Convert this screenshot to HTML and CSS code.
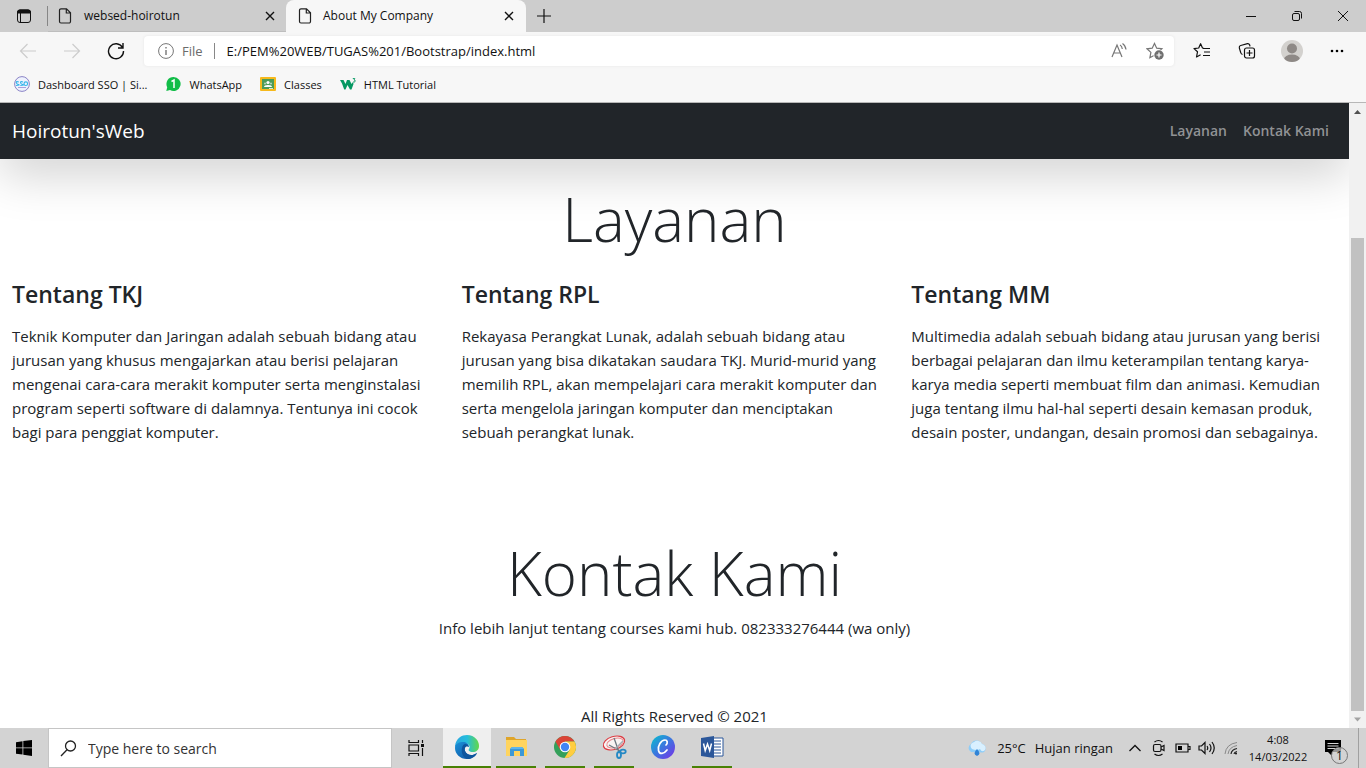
FILE: index.html
```html
<!DOCTYPE html>
<html lang="id">
<head>
<meta charset="utf-8">
<meta name="viewport" content="width=device-width, initial-scale=1">
<title>About My Company</title>
<link rel="stylesheet" href="styles.css">
</head>
<body class="screen">
<div class="tabstrip">
  <button class="tab-actions" aria-label="Tab actions"><svg width="16" height="16" viewBox="0 0 16 16"><rect x="1.5" y="2" width="13" height="12.5" rx="2.5" fill="none" stroke="#111"/><path d="M1.5 5V4a2 2 0 0 1 2-2h9a2 2 0 0 1 2 2v1z" fill="#111" stroke="#111"/><path d="M4.5 5v9.500" stroke="#111"/></svg></button>
  <span class="tab-divider"></span>
  <div class="tab">
    <svg class="tab-icon" width="14" height="16" viewBox="0 0 14 16" fill="none" stroke="#222" stroke-width="1.2"><path d="M3 .8h5.500l4 4V13.500a1.500 1.500 0 0 1-1.500 1.500H3a1.500 1.500 0 0 1-1.500-1.500V2.300A1.500 1.500 0 0 1 3 .8zM8.300 1v4h4"/></svg>
    <button class="tab-title">websed-hoirotun</button>
    <button class="tab-close" aria-label="Close tab"><svg width="10" height="10" viewBox="0 0 10 10"><path d="M1 1l8 8M9 1l-8 8" stroke="#111" stroke-width="1.400"/></svg></button>
  </div>
  <div class="tab tab-active">
    <svg class="tab-icon" width="14" height="16" viewBox="0 0 14 16" fill="none" stroke="#222" stroke-width="1.2"><path d="M3 .8h5.500l4 4V13.500a1.500 1.500 0 0 1-1.500 1.500H3a1.500 1.500 0 0 1-1.500-1.500V2.300A1.500 1.500 0 0 1 3 .8zM8.300 1v4h4"/></svg>
    <button class="tab-title">About My Company</button>
    <button class="tab-close" aria-label="Close tab"><svg width="10" height="10" viewBox="0 0 10 10"><path d="M1 1l8 8M9 1l-8 8" stroke="#111" stroke-width="1.400"/></svg></button>
  </div>
  <button class="new-tab" aria-label="New tab"><svg width="14" height="14" viewBox="0 0 14 14"><path d="M7 0v14M0 7h14" stroke="#111" stroke-width="1.200"/></svg></button>
  <div class="window-controls">
    <button aria-label="Minimize"><svg width="12" height="12" viewBox="0 0 12 12"><path d="M1 6.500h10" stroke="#111"/></svg></button>
    <button aria-label="Restore"><svg width="12" height="12" viewBox="0 0 12 12" fill="none" stroke="#111"><rect x="1.500" y="3.500" width="7" height="7" rx="1.500"/><path d="M3.500 1.500H8.500a2 2 0 0 1 2 2V8.500"/></svg></button>
    <button aria-label="Close"><svg width="12" height="12" viewBox="0 0 12 12"><path d="M1 1l10 10M11 1L1 11" stroke="#111"/></svg></button>
  </div>
</div>

<div class="toolbar">
  <div class="nav-buttons">
    <button aria-label="Back"><svg width="18" height="16" viewBox="0 0 18 16" fill="none" stroke="#ccc" stroke-width="1.200"><path d="M17 8H1.500M8.500 1l-7 7 7 7"/></svg></button>
    <button aria-label="Forward"><svg width="18" height="16" viewBox="0 0 18 16" fill="none" stroke="#ccc" stroke-width="1.200"><path d="M1 8h15.500M9.500 1l7 7-7 7"/></svg></button>
    <button aria-label="Refresh"><svg width="18" height="18" viewBox="0 0 18 18" fill="none" stroke="#111" stroke-width="1.400"><path d="M15.500 5.500A7.500 7.500 0 1 0 16.500 9M16 1v5h-5"/></svg></button>
  </div>
  <div class="address">
    <svg width="16" height="16" viewBox="0 0 16 16" fill="none" stroke="#767676"><circle cx="8" cy="8" r="7.400"/><path d="M8 7v5M8 4v1.600" stroke-width="1.400"/></svg>
    <span class="scheme">File</span>
    <input class="url" type="text" aria-label="Address" value="E:/PEM%20WEB/TUGAS%201/Bootstrap/index.html">
    <button aria-label="Read aloud"><svg width="18" height="18" viewBox="0 0 18 18" fill="none" stroke="#767676" stroke-width="1.200"><path d="M2 15L7 3l5 12M3.700 11h6.600M10 3q2 1 2.300 4M12.500 1.500q3 2 3.500 6"/></svg></button>
    <button aria-label="Add to favorites"><svg width="18" height="18" viewBox="0 0 18 18"><path d="M8.500 1.500l2.200 4.700 5.200.6-3.800 3.600 1 5.300-4.600-2.500-4.600 2.500 1-5.300L1 6.800l5.200-.6z" fill="none" stroke="#767676" stroke-width="1.200"/><circle cx="13" cy="13" r="5.600" fill="#fff"/><circle cx="13" cy="13" r="4.700" fill="#707070"/><path d="M13 10.500v5M10.500 13h5" stroke="#fff" stroke-width="1.200"/></svg></button>
  </div>
  <div class="browser-tools">
    <button aria-label="Favorites"><svg width="18" height="18" viewBox="0 0 18 18" fill="none" stroke="#111" stroke-width="1.200"><path d="M11 6.300L9.500 6 7.600 1.700 5.700 6 1 6.600l3.500 3.200-1 5.200 4.100-2.300M10 6.500h7M11 10h6M10 13.500h7" stroke-linejoin="round"/></svg></button>
    <button aria-label="Collections"><svg width="18" height="18" viewBox="0 0 18 18" fill="none" stroke="#111" stroke-width="1.200"><path d="M4.500 12.500Q3 12 2.700 10.500L1.300 5.800Q1 4 2.700 3.500L9.500 1.700Q11 1.500 11.700 3l.3 1.300"/><rect x="6.500" y="6" width="10" height="10" rx="2"/><path d="M11.500 8v6M8.500 11h6"/></svg></button>
    <button aria-label="Profile"><svg width="22" height="22" viewBox="0 0 22 22"><defs><clipPath id="avatar"><circle cx="11" cy="11" r="11"/></clipPath></defs><g clip-path="url(#avatar)"><path d="M0 0h22v22H0z" fill="#d3d1ce"/><circle cx="11" cy="8.500" r="5" fill="#8e8986"/><ellipse cx="11" cy="19.500" rx="8" ry="5" fill="#8e8986"/></g></svg></button>
    <button aria-label="Settings and more"><svg width="18" height="18" viewBox="0 0 18 18"><circle cx="4" cy="9" r="1.300"/><circle cx="9" cy="9" r="1.300"/><circle cx="14" cy="9" r="1.300"/></svg></button>
  </div>
</div>

<nav class="bookmarks" aria-label="Favorites bar">
  <a href="#"><svg width="16" height="16" viewBox="0 0 16 16" fill="none"><circle cx="8" cy="8" r="7.400" fill="#eef2fd" stroke="#8b83c6"/><path d="M4.800 6Q2 5 2.200 6.500T4.500 8.500 2 9.500M9 6Q6.500 5 6.500 6.500T8.800 8.500 6.300 9.500" stroke="#35b5ea" stroke-width="1.100"/><circle cx="11.800" cy="7.700" r="1.800" stroke="#35b5ea" stroke-width="1.100"/><path d="M4 11.500h8" stroke="#a9a1dc"/></svg><span>Dashboard SSO | Si...</span></a>
  <a href="#"><svg width="16" height="16" viewBox="0 0 16 16"><path d="M8.500 1A7 7 0 1 1 5 14L1.300 15l.9-3.800A7 7 0 0 1 8.500 1z" fill="#12bd48"/><path d="M6.500 5.500L9 4v8" fill="none" stroke="#fff" stroke-width="1.500"/></svg><span>WhatsApp</span></a>
  <a href="#"><svg width="16" height="16" viewBox="0 0 16 16"><rect y="1" width="16" height="14" rx="1" fill="#f6b91c"/><path d="M2 3h12v10H2z" fill="#4b9c5a"/><circle cx="8" cy="6.500" r="1.600" fill="#fff"/><circle cx="5" cy="7.500" r="1" fill="#b7d7bd"/><circle cx="11" cy="7.500" r="1" fill="#b7d7bd"/><path d="M4 11q0-2 4-2t4 2z" fill="#fff"/><path d="M9 12h4v1H9z" fill="#d4ead7"/></svg><span>Classes</span></a>
  <a href="#"><svg width="16" height="16" viewBox="0 0 16 16"><path d="M0 4h3.500l2 4 1.500-4h2.500l2 4L13 6l.5 2-2 5.500h-1.500L7.500 9l-2 4.500H4.200L2 7.500z" fill="#059862"/><path d="M12.800 2.500h2L14 4q2 .2 1 1.700-.8.800-2 .2" fill="none" stroke="#059862" stroke-width=".9"/></svg><span>HTML Tutorial</span></a>
</nav>

<div class="viewport">
  <div class="page">
    <header class="navbar">
      <a class="brand" href="#">Hoirotun'sWeb</a>
      <nav class="nav-links"><a href="#layanan">Layanan</a><a href="#kontak">Kontak Kami</a></nav>
    </header>
    <main>
      <section id="layanan" class="services">
        <h2 class="display">Layanan</h2>
        <div class="columns">
          <article class="service"><h3>Tentang TKJ</h3><p>Teknik Komputer dan Jaringan adalah sebuah bidang atau jurusan yang khusus mengajarkan atau berisi pelajaran mengenai cara-cara merakit komputer serta menginstalasi program seperti software di dalamnya. Tentunya ini cocok bagi para penggiat komputer.</p></article>
          <article class="service"><h3>Tentang RPL</h3><p>Rekayasa Perangkat Lunak, adalah sebuah bidang atau jurusan yang bisa dikatakan saudara TKJ. Murid-murid yang memilih RPL, akan mempelajari cara merakit komputer dan serta mengelola jaringan komputer dan menciptakan sebuah perangkat lunak.</p></article>
          <article class="service"><h3>Tentang MM</h3><p>Multimedia adalah sebuah bidang atau jurusan yang berisi berbagai pelajaran dan ilmu keterampilan tentang karya-karya media seperti membuat film dan animasi. Kemudian juga tentang ilmu hal-hal seperti desain kemasan produk, desain poster, undangan, desain promosi dan sebagainya.</p></article>
        </div>
      </section>
      <section id="kontak" class="contact">
        <h2 class="display">Kontak Kami</h2>
        <p>Info lebih lanjut tentang courses kami hub. 082333276444 (wa only)</p>
      </section>
    </main>
    <footer class="footer">All Rights Reserved © 2021</footer>
  </div>
  <div class="scrollbar" aria-hidden="true">
    <svg class="scroll-arrow" width="17" height="17" viewBox="0 0 17 17"><path d="M5 11l3.500-4 3.500 4z" fill="#505050"/></svg>
    <div class="scroll-track"><div class="scroll-thumb"></div></div>
    <svg class="scroll-arrow" width="17" height="17" viewBox="0 0 17 17"><path d="M5 6.500l3.500 4 3.500-4z" fill="#a3a3a3"/></svg>
  </div>
</div>

<div class="taskbar">
  <button class="start" aria-label="Start"><svg width="16" height="16" viewBox="0 0 16 16"><path d="M0 2.200L6.500 1.200v6.300H0zM7.300 1.100L16 0v7.500H7.300zM0 8.300h6.500v6.300L0 13.800zM7.300 8.300H16V16l-8.700-1.200z"/></svg></button>
  <label class="search"><svg width="17" height="17" viewBox="0 0 17 17" fill="none" stroke="#222" stroke-width="1.300"><circle cx="10.500" cy="6" r="5"/><path d="M7 9.700L1 16"/></svg><input type="text" placeholder="Type here to search" aria-label="Search"></label>
  <button class="task task-view" aria-label="Task view"><svg width="18" height="16" viewBox="0 0 18 16" fill="none" stroke="#111" stroke-width="1.200"><path d="M2 0v2.500h9.500V0M2 16v-2.500h9.500V16M15.500 0v3M15.500 8v8"/><path d="M2 5h9.500v6H2z"/><path d="M14 4h3v3h-3z" fill="#111" stroke="none"/></svg></button>
  <div class="apps">
    <button class="task app running current" aria-label="Microsoft Edge"><svg width="26" height="26" viewBox="0 0 26 26"><defs><linearGradient id="edgeTop"><stop stop-color="#2aa6df"/><stop offset=".5" stop-color="#25bddd"/><stop offset="1" stop-color="#64d847"/></linearGradient><linearGradient id="edgeLow" x1="0" y1="0" x2="1" y2="1"><stop stop-color="#1b91d8"/><stop offset="1" stop-color="#0c4d9c"/></linearGradient></defs><path d="M1 12C2 4 8 1 13 1c8 0 12 6 12 11 0 4-3 6-6 6-4 0-5-2-4-3 2-3-1-6-5-6-4 0-8 1-9 5z" fill="url(#edgeTop)"/><path d="M1 14c0-5 5-6 8-6s6 2 6 5c-3-2-5 1-4 4 2 5 8 5 12 2-2 4-6 6-10 6C6 25 1 20 1 14z" fill="url(#edgeLow)"/><path d="M8 14c1-5 5-5 7-1-3-2-5 1-4 4 2 5 8 5 12 2-2 4-6 6-10 6-4-2-6-6-5-11z" fill="#0d559d"/></svg></button>
    <button class="task app running" aria-label="File Explorer"><svg width="24" height="24" viewBox="0 0 24 24"><path d="M2 2h8l2 2h10v17H2z" fill="#dfa52a"/><path d="M2 5h21v16H2z" fill="#ffd45e"/><path d="M6 21v-7l2-2h10l2 2v7h-4v-5h-6v5z" fill="#3c99d6"/><path d="M6 14l2-2h10l2 2z" fill="#5db5ec"/></svg></button>
    <button class="task app running" aria-label="Google Chrome"><svg width="24" height="24" viewBox="0 0 24 24"><circle cx="12" cy="12" r="11" fill="#34a05a"/><path d="M2.500 6.500A11 11 0 0 1 21.500 6.500H12L7.200 14.800z" fill="#db4437"/><path d="M12 6.500h9.500A11 11 0 0 1 11.500 23l5.200-8.200z" fill="#ffcd40"/><circle cx="12" cy="12" r="5.300" fill="#fff"/><circle cx="12" cy="12" r="4.200" fill="#4285f4"/></svg></button>
    <button class="task app running" aria-label="Snipping Tool"><svg width="26" height="26" viewBox="0 0 26 26" fill="none"><ellipse cx="13" cy="9" rx="11" ry="6.500" transform="rotate(-17 13 9)" fill="#f8f3f3" stroke="#dc3c43" stroke-width="1.200"/><ellipse cx="14" cy="9" rx="8.500" ry="4.500" transform="rotate(-17 14 9)" stroke="#e9888c"/><path d="M13 4l5 14M8 11l11 6" stroke="#6d7880" stroke-width="1.300"/><path d="M22 7l-8 8" stroke="#a5aeb4" stroke-width="1.400"/><ellipse cx="18" cy="21" rx="2" ry="3" stroke="#2388c5" stroke-width="1.800"/><ellipse cx="22" cy="17.500" rx="2.700" ry="1.900" stroke="#2388c5" stroke-width="1.800"/></svg></button>
    <button class="task app" aria-label="Canva"><svg width="24" height="24" viewBox="0 0 24 24"><defs><linearGradient id="canva" x1="0" y1="0" x2="1" y2="1"><stop stop-color="#05c2cd"/><stop offset=".5" stop-color="#3c75df"/><stop offset="1" stop-color="#7b2ee8"/></linearGradient></defs><circle cx="12" cy="12" r="12" fill="url(#canva)"/><path d="M15 10c2-2 1.500-5-1-5-4 0-7.500 6-6.500 10.500C8.500 20 13 19 16 15" fill="none" stroke="#fff" stroke-width="1.700" stroke-linecap="round"/></svg></button>
    <button class="task app running" aria-label="Microsoft Word"><svg width="24" height="24" viewBox="0 0 24 24"><path d="M12 3h11v18H12z" fill="#fff" stroke="#2b579a"/><path d="M14 6h7M14 9h7M14 12h7M14 15h7M14 18h7" stroke="#2b579a"/><path d="M1 3l13-2v22L1 21z" fill="#2b579a"/><path d="M3.500 8.500l1.700 7L7.500 9l2.200 6.500 1.800-7" fill="none" stroke="#fff" stroke-width="1.500"/></svg></button>
  </div>
  <div class="tray">
    <button class="weather"><svg width="22" height="18" viewBox="0 0 22 18"><path d="M5 13a4.500 4.500 0 0 1 0-8 6 6 0 0 1 11 0 4.500 4.500 0 0 1 1 8.500z" fill="#8fcdf8"/><path d="M6 10a4 4 0 0 1 2-7 5 5 0 0 1 8 2 4 4 0 0 1 3 6q-3 3-5-1-3 2-8 0z" fill="#d9f0ff"/><path d="M11 10q5 5 0 7-5-2 0-7z" fill="#3084d7"/></svg><span>25°C</span><span>Hujan ringan</span></button>
    <button class="tray-icon" aria-label="Show hidden icons"><svg width="14" height="14" viewBox="0 0 14 14"><path d="M1.500 10L7 4.500l5.500 5.500" fill="none" stroke="#111" stroke-width="1.300"/></svg></button>
    <button class="tray-icon" aria-label="Meet now"><svg width="14" height="18" viewBox="0 0 14 18" fill="none" stroke="#111" stroke-width="1.200"><rect x="1.500" y="5.500" width="7.500" height="7" rx="1.500"/><path d="M9 8l3-1.500v5L9 10M2.500 3q4-3 8 0M2.500 15q4 3 8 0"/></svg></button>
    <button class="tray-icon" aria-label="Battery"><svg width="16" height="10" viewBox="0 0 16 10"><path d="M1 1h12v8H1zM13 3.500h2v3h-2" fill="none" stroke="#111" stroke-width="1.200"/><path d="M3 3h4v4H3z"/></svg></button>
    <button class="tray-icon" aria-label="Volume"><svg width="18" height="16" viewBox="0 0 18 16" fill="none" stroke="#111" stroke-width="1.200"><path d="M1 6h2.500L7 2.500v11L3.500 10H1zM9 6q1.500 2 0 4M11.500 4q3 4 0 8M14 2q4.500 6 0 12"/></svg></button>
    <button class="tray-icon" aria-label="Network"><svg width="14" height="14" viewBox="0 0 14 14" fill="none"><path d="M1 13Q2 3 13 1.500M4 13Q5 6 13 4.500" stroke="#888"/><path d="M7 13q.5-4.500 6-5.500M10 13q.3-2 3-2.500" stroke="#222" stroke-width="1.200"/><circle cx="12" cy="12.500" r="1" fill="#111"/></svg></button>
    <button class="clock"><span>4:08</span><span>14/03/2022</span></button>
    <button class="notifications" aria-label="Notifications"><svg width="18" height="16" viewBox="0 0 18 16"><path d="M1 0h16v12H8v4l-4-4H1z"/><path d="M3.500 3.500h11M3.500 6h11M3.500 8.500h11" stroke="#d4d4d4"/></svg><span class="badge">1</span></button>
    <span class="show-desktop"></span>
  </div>
</div>
</body>
</html>
```
FILE: styles.css
```css
* { box-sizing: border-box; }

.screen {
  margin: 0;
  height: 100vh;
  display: flex;
  flex-direction: column;
  overflow: hidden;
  background: #fff;
  color: #212529;
  font-family: "Open Sans", "Noto Sans", sans-serif;
}

button, input { font: inherit; color: inherit; border: 0; padding: 0; background: none; }
button { display: inline-flex; align-items: center; justify-content: center; flex: none; }
input { outline: 0; min-width: 0; }
a { color: inherit; text-decoration: none; }
svg { display: block; flex: none; }
h2, h3, p { margin: 0; }

/* Tabs */
.tabstrip { display: flex; flex: none; height: 32px; background: #cdcdcd; font-size: 12px; color: #111; }
.tab-actions { width: 47px; }
.tab-divider { width: 1px; height: 20px; align-self: center; background: #868686; }
.tab { display: flex; align-items: center; width: 238px; padding: 0 10px; border-bottom: 1px solid #bebebe; }
.tab-active { width: 240px; padding: 0 11px 0 12px; background: #f7f7f7; border-bottom-color: #f7f7f7; border-radius: 8px 8px 0 0; }
.tab-title { flex: 1; justify-content: flex-start; margin-left: 12px; white-space: nowrap; }
.tab-active .tab-title { margin-left: 11px; }
.tab-close { width: 12px; height: 20px; }
.new-tab { width: 35px; }
.window-controls { display: flex; margin-left: auto; }
.window-controls button { width: 46px; }

/* Toolbar */
.toolbar { display: flex; align-items: center; flex: none; height: 38px; background: #f7f7f7; }
.nav-buttons { display: flex; width: 144px; padding-left: 6px; }
.nav-buttons button { width: 44px; height: 30px; }
.address { display: flex; align-items: center; flex: 1; height: 30px; padding: 0 10px 0 14px; background: #fff; border-radius: 4px; box-shadow: 0 0 3px #e4e4e4; font-size: 13px; }
.scheme { margin-left: 8px; padding-right: 11px; border-right: 1px solid #888; line-height: 16px; color: #6b6b6b; }
.url { flex: 1; margin-left: 12px; color: #111; }
.address button { width: 18px; margin-left: 18px; }
.browser-tools { display: flex; align-items: center; width: 192px; padding-left: 5px; }
.browser-tools button { width: 45px; height: 30px; }

/* Favorites bar */
.bookmarks { display: flex; flex: none; height: 33px; padding: 0 14px 4px; gap: 18px; background: #f7f7f7; border-bottom: 1px solid #b7b7b7; font-size: 11px; color: #111; }
.bookmarks a { display: flex; align-items: center; gap: 8px; }

/* Web page */
.viewport { display: flex; flex: 1; min-height: 0; }
.page { flex: 1; min-width: 0; overflow: hidden; font-size: 15px; line-height: 24px; }
.navbar { display: flex; align-items: center; justify-content: space-between; height: 56px; padding: 0 20px 0 12px; background: #212529; box-shadow: 0 16px 48px rgba(0, 0, 0, .18); }
.brand { color: #fff; font-size: 19px; font-weight: 500; }
.nav-links { display: flex; gap: 16px; color: #909294; font-size: 14px; font-weight: 600; }
.display { font-size: 60px; line-height: 76px; font-weight: 300; text-align: center; }
.services { padding-top: 22px; }
.columns { display: grid; grid-template-columns: repeat(3, 1fr); padding-top: 23px; }
.service { padding: 0 12px; }
.service h3 { margin-bottom: 15px; font-size: 23px; line-height: 29px; font-weight: 600; }
.contact { padding-top: 91px; text-align: center; }
.contact p { padding-top: 5px; }
.footer { padding-top: 64px; text-align: center; }

/* Scrollbar */
.scrollbar { display: flex; flex-direction: column; width: 17px; background: #f1f1f1; }
.scroll-track { display: flex; flex-direction: column; justify-content: flex-end; flex: 1; padding: 0 2px; }
.scroll-thumb { height: 80%; background: #c1c1c1; }

/* Taskbar */
.taskbar { display: flex; flex: none; height: 40px; background: #d3d3d3; font-size: 14px; color: #111; }
.start { width: 48px; }
.search { display: flex; align-items: center; flex: none; width: 344px; padding: 0 11px; gap: 11px; background: #fff; border: 1px solid #c5c5c5; }
.search input { flex: 1; }
.search input::placeholder { color: #333; opacity: 1; }
.task { width: 48px; }
.task-view { margin-right: 3px; }
.apps { display: flex; gap: 9px; }
.app { width: 40px; border-bottom: 2px solid transparent; }
.running { border-bottom-color: #498205; }
.current { width: 48px; margin-right: -4px; background: #efefef; }
.tray { display: flex; margin-left: auto; }
.weather { gap: 9px; margin-right: 10px; font-size: 13px; }
.tray-icon { width: 24px; }
.clock { flex-direction: column; width: 70px; font-size: 11px; line-height: 17px; }
.notifications { position: relative; width: 40px; }
.badge { position: absolute; left: 18px; top: 19px; width: 17px; height: 17px; border: 1px solid #777; border-radius: 50%; background: rgba(211, 211, 211, .7); font-size: 12px; line-height: 15px; }
.show-desktop { width: 8px; margin-left: 5px; border-left: 1px solid #a0a0a0; }
```
